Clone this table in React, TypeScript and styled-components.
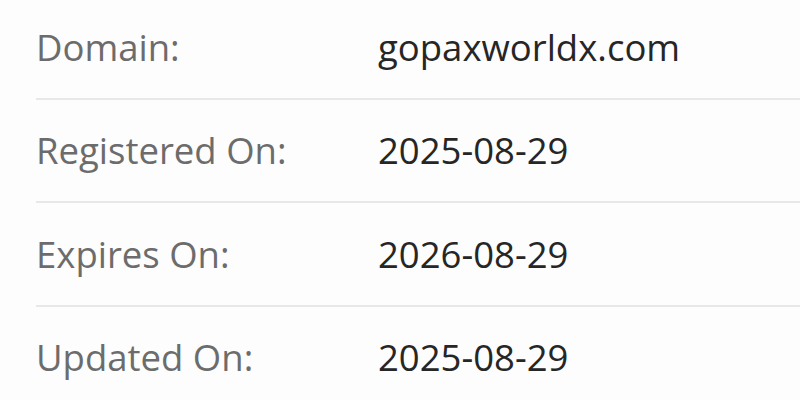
import React from "react";
import styled, { createGlobalStyle } from "styled-components";

const Global = createGlobalStyle`
  html, body { margin: 0; padding: 0; background: #fdfdfd; }
  body { font-family: "Open Sans", "Liberation Sans", sans-serif; overflow: hidden; }
`;

const Table = styled.div`
  display: flex;
  flex-direction: column;
  margin-top: -4px;
  padding-left: 36px;
`;

const Row = styled.div<{ $last?: boolean }>`
  display: grid;
  grid-template-columns: 342px 1fr;
  align-items: center;
  height: 101.5px;
  border-bottom: ${(p) => (p.$last ? "none" : "2px solid #e8e8e8")};
`;

const Label = styled.div`
  font-size: 36.5px;
  color: #6c6c6c;
  line-height: 1;
`;

const Value = styled.div`
  font-size: 36.5px;
  color: #262626;
  line-height: 1;
`;

const rows = [
  ["Domain:", "gopaxworldx.com"],
  ["Registered On:", "2025-08-29"],
  ["Expires On:", "2026-08-29"],
  ["Updated On:", "2025-08-29"],
];

export default function App() {
  return (
    <>
      <Global />
      <Table>
        {rows.map(([l, v], i) => (
          <Row key={l} $last={i === rows.length - 1}>
            <Label>{l}</Label>
            <Value>{v}</Value>
          </Row>
        ))}
      </Table>
    </>
  );
}
